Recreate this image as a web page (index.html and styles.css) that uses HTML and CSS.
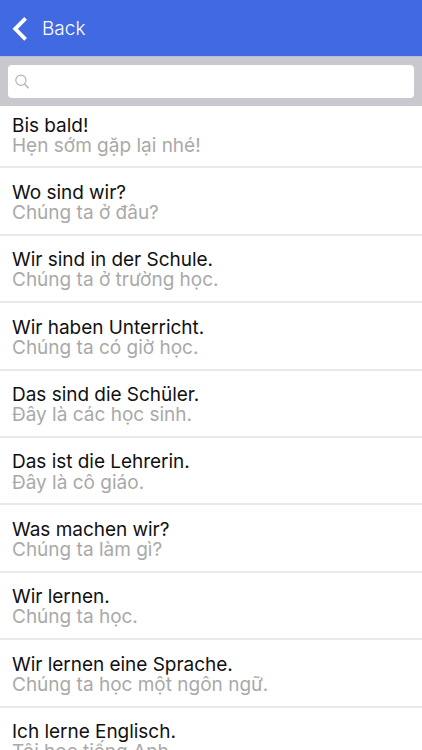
FILE: index.html
```html
<!DOCTYPE html>
<html lang="de">
<head>
    <meta charset="utf-8">
    <title>Phrases</title>
    <link rel="stylesheet" href="styles.css">
</head>
<body>
    <div class="navbar">
        <svg class="back-icon" width="16" height="26" viewBox="0 0 16 26">
            <path d="M14.6 2.3 L4.2 12.8 L14.6 23.3" fill="none" stroke="#fff" stroke-width="3.8"/>
        </svg>
        <span class="back-label">Back</span>
    </div>
    <div class="searchbar">
        <div class="search-field">
            <svg class="search-icon" width="16" height="16" viewBox="0 0 16 16">
                <circle cx="5.9" cy="6.3" r="5.1" fill="none" stroke="#b4b4b6" stroke-width="1.2"/>
                <path d="M9.6 10 L13.7 14.3" stroke="#b4b4b6" stroke-width="1.5"/>
            </svg>
        </div>
    </div>
    <ul class="list">
        <li class="row">
            <span class="title">Bis bald!</span>
            <span class="subtitle">Hẹn sớm gặp lại nhé!</span>
        </li>
        <li class="row">
            <span class="title">Wo sind wir?</span>
            <span class="subtitle">Chúng ta ở đâu?</span>
        </li>
        <li class="row">
            <span class="title">Wir sind in der Schule.</span>
            <span class="subtitle">Chúng ta ở trường học.</span>
        </li>
        <li class="row">
            <span class="title">Wir haben Unterricht.</span>
            <span class="subtitle">Chúng ta có giờ học.</span>
        </li>
        <li class="row">
            <span class="title">Das sind die Schüler.</span>
            <span class="subtitle">Đây là các học sinh.</span>
        </li>
        <li class="row">
            <span class="title">Das ist die Lehrerin.</span>
            <span class="subtitle">Đây là cô giáo.</span>
        </li>
        <li class="row">
            <span class="title">Was machen wir?</span>
            <span class="subtitle">Chúng ta làm gì?</span>
        </li>
        <li class="row">
            <span class="title">Wir lernen.</span>
            <span class="subtitle">Chúng ta học.</span>
        </li>
        <li class="row">
            <span class="title">Wir lernen eine Sprache.</span>
            <span class="subtitle">Chúng ta học một ngôn ngữ.</span>
        </li>
        <li class="row">
            <span class="title">Ich lerne Englisch.</span>
            <span class="subtitle">Tôi học tiếng Anh.</span>
        </li>
    </ul>
</body>
</html>
```
FILE: styles.css
```css
body {
    margin: 0;
    height: 750px;
    overflow: hidden;
    display: flex;
    flex-direction: column;
    background-color: #fff;
    font-family: Inter, "Liberation Sans", sans-serif;
    font-size: 19px;
}

.navbar {
    flex: none;
    height: 56px;
    display: flex;
    align-items: center;
    padding: 1px 0 0 11px;
    box-sizing: border-box;
    background-color: #4169e1;
    color: #fff;
}

.back-label {
    margin-left: 15px;
    font-size: 19px;
    font-weight: 300;
}

.searchbar {
    flex: none;
    height: 50px;
    box-sizing: border-box;
    padding: 8px 8px 8px;
    background-color: #c9c8cf;
    border-top: 1px solid #b8bce0;
}

.search-field {
    height: 33px;
    display: flex;
    align-items: center;
    padding-left: 7px;
    border-radius: 4px;
    background-color: #fff;
}

.list {
    flex: 1;
    min-height: 0;
    overflow: hidden;
    margin: 0;
    padding: 0;
    list-style: none;
}

.row {
    height: 67.4px;
    box-sizing: border-box;
    padding: 14.5px 12px 0;
    border-bottom: 2px solid #e9e9e9;
    line-height: 20.2px;
    white-space: nowrap;
}

/* the first row is partly scrolled under the search bar */
.row:first-child {
    height: 62.4px;
    padding-top: 9.9px;
}

.title,
.subtitle {
    display: block;
}

.title {
    color: #111;
    letter-spacing: -0.03px;
}

.subtitle {
    color: #a9a9a9;
}
```
